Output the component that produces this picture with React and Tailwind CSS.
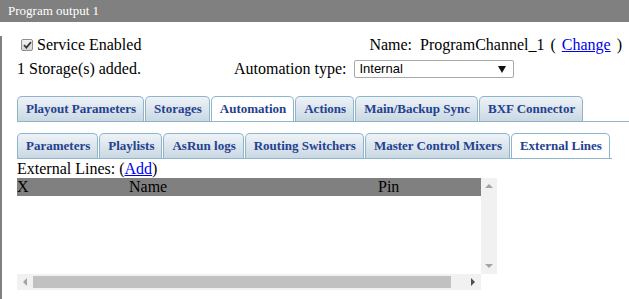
import React from 'react';

const rowOne = ['Playout Parameters', 'Storages', 'Automation', 'Actions', 'Main/Backup Sync', 'BXF Connector'];
const rowTwo = ['Parameters', 'Playlists', 'AsRun logs', 'Routing Switchers', 'Master Control Mixers', 'External Lines'];

const Tab = ({ label, active }) => (
  <div
    className={`h-[25px] pl-[8px] pr-[7px] border border-b-0 border-[#8fb5cb] rounded-t-[5px] text-[13px] font-bold leading-[24px] text-[#24418f] whitespace-nowrap ${
      active ? 'bg-white' : 'bg-linear-to-b from-[#eef3f7] to-[#cad8e3]'
    }`}
  >
    {label}
  </div>
);

const TabRow = ({ tabs, active, className }) => (
  <div className={`flex items-end gap-[1px] border-b border-[#8fb5cb] ${className}`}>
    {tabs.map((t) => (
      <Tab key={t} label={t} active={t === active} />
    ))}
  </div>
);

const Checkbox = () => (
  <span className="w-[12px] h-[12px] ml-[4px] mr-[4px] border border-[#8f8f8f] rounded-[2px] bg-linear-to-b from-[#f2f2f2] to-[#d6d6d6] flex items-center justify-center">
    <svg width="9" height="8" viewBox="0 0 9 8">
      <path d="M1 4.2 L3.4 6.6 L8 1.2" stroke="#3a3a3a" strokeWidth="1.8" fill="none" />
    </svg>
  </span>
);

export default function App() {
  return (
    <div className="w-[629px] h-[299px] overflow-hidden bg-white text-black font-['Liberation_Serif','Times_New_Roman',serif]">
      <div className="h-[22px] bg-[#808080] text-white text-[13px] leading-[22px] pl-[8px]">Program output 1</div>
      <div className="h-[277px] border-l-2 border-[#808080] pl-[15px] text-[16px]">
        <div className="mt-[14px] h-[18px] flex items-center justify-between pr-[7px]">
          <div className="flex items-center">
            <Checkbox />
            <span>Service Enabled</span>
          </div>
          <div className="flex items-center whitespace-pre">
            <span>Name:</span>
            <span className="ml-[8px]">ProgramChannel_1</span>
            <span className="ml-[6px]">(</span>
            <a href="#" className="ml-[6px] text-[#0000ee] underline">Change</a>
            <span className="ml-[6px]">)</span>
          </div>
        </div>
        <div className="mt-[6px] h-[18px] flex items-center">
          <span className="w-[217px]">1 Storage(s) added.</span>
          <span>Automation type:</span>
          <div className="ml-[8px] w-[160px] h-[18px] border border-[#a9a9a9] rounded-[2px] flex items-center justify-between pl-[4px] pr-[7px] font-['Liberation_Sans',Arial,sans-serif] text-[13px]">
            <span>Internal</span>
            <svg width="8" height="7" viewBox="0 0 8 7">
              <path d="M0 0 H8 L4 7 Z" fill="#111" />
            </svg>
          </div>
        </div>

        <TabRow tabs={rowOne} active="Automation" className="mt-[18px]" />
        <TabRow tabs={rowTwo} active="External Lines" className="mt-[11px] mr-[17px]" />

        <div className="h-[19px] leading-[19px]">
          External Lines: (<a href="#" className="text-[#0000ee] underline">Add</a>)
        </div>

        <div className="flex w-[480px]">
          <div className="w-[464px] flex flex-col">
            <div className="h-[96px]">
              <div className="h-[18px] leading-[18px] bg-[#808080] grid grid-cols-[112px_249px_1fr]">
                <span>X</span>
                <span>Name</span>
                <span>Pin</span>
              </div>
            </div>
            <div className="h-[16px] bg-[#f1f1f1] flex items-center">
              <div className="w-[16px] h-[16px] flex items-center justify-center">
                <svg width="4" height="8" viewBox="0 0 4 8">
                  <path d="M4 0 V8 L0 4 Z" fill="#a3a3a3" />
                </svg>
              </div>
              <div className="w-[418px] h-[12px] bg-[#c1c1c1]" />
              <div className="ml-auto w-[16px] h-[16px] flex items-center justify-center">
                <svg width="4" height="8" viewBox="0 0 4 8">
                  <path d="M0 0 V8 L4 4 Z" fill="#505050" />
                </svg>
              </div>
            </div>
          </div>
          <div className="w-[16px] h-[96px] bg-[#f1f1f1] flex flex-col justify-between">
            <div className="h-[16px] flex items-center justify-center">
              <svg width="8" height="4" viewBox="0 0 8 4">
                <path d="M0 4 H8 L4 0 Z" fill="#a3a3a3" />
              </svg>
            </div>
            <div className="h-[16px] flex items-center justify-center">
              <svg width="8" height="4" viewBox="0 0 8 4">
                <path d="M0 0 H8 L4 4 Z" fill="#a3a3a3" />
              </svg>
            </div>
          </div>
        </div>
      </div>
    </div>
  );
}
